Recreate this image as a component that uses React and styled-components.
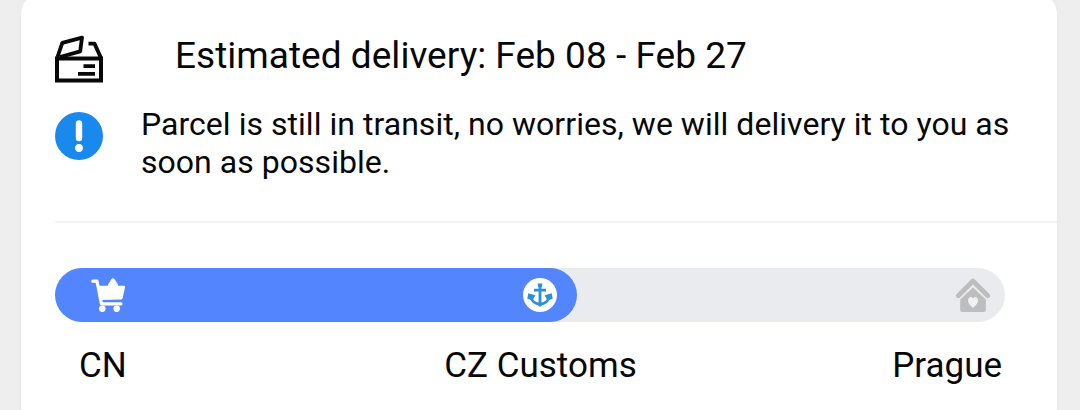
import React from 'react';
import styled, { createGlobalStyle } from 'styled-components';

const GlobalStyle = createGlobalStyle`
  * { box-sizing: border-box; }
  body { margin: 0; background: #eeeeee; font-family: Roboto, "Liberation Sans", sans-serif; color: #070707; }
`;

const Page = styled.main`
  height: 410px;
  overflow: hidden;
  padding: 0 23px 0 21px;
`;

const Card = styled.section`
  height: 440px;
  margin-top: -7px;
  padding: 41px 0 0 34px;
  background: #fff;
  border-radius: 21px;
  box-shadow: 0 0 4px #e6e6e6;
`;

const Row = styled.div`
  display: flex;
  align-items: flex-start;
`;

const RowIcon = styled.svg`
  flex: none;
  width: 48px;
  height: 48px;
  margin-top: ${(p) => p.$top}px;
`;

const Title = styled.h1`
  margin: 0 0 0 72px;
  font-size: 37px;
  line-height: 44px;
  font-weight: 400;
  letter-spacing: 0.025px;
  white-space: nowrap;
`;

const Message = styled.p`
  width: 890px;
  margin: 0 0 0 38px;
  font-size: 32px;
  line-height: 38px;
  letter-spacing: 0.035px;
`;

const Notice = styled(Row)`
  margin-top: 22px;
`;

const Divider = styled.hr`
  height: 2px;
  margin: 40px 0 45px;
  border: 0;
  background: #f3f3f3;
`;

const Track = styled.div`
  display: flex;
  align-items: center;
  justify-content: space-between;
  width: 950px;
  height: 54px;
  padding-right: 15px;
  border-radius: 27px;
  background: #eaebef;
`;

const Progress = styled.div`
  display: flex;
  align-items: center;
  justify-content: space-between;
  width: 522px;
  height: 54px;
  padding: 0 20px 0 36px;
  border-radius: 27px;
  background: #5385ff;
`;

const StepIcon = styled.svg`
  flex: none;
  width: 34px;
  height: 34px;
`;

const Labels = styled.div`
  display: grid;
  grid-template-columns: 1fr auto 1fr;
  width: 950px;
  margin-top: 23px;
  padding: 0 3px 0 24px;
  font-size: 35px;
  line-height: 42px;
`;

const Label = styled.span`
  white-space: nowrap;
  text-align: ${(p) => p.$align || 'left'};
`;

const ParcelIcon = () => (
  <RowIcon $top={1} viewBox="0 0 48 48" fill="none" stroke="#080808" strokeWidth="4">
    <path d="M2 23.6H46V45.6H2Z" />
    <path d="M2.5 22 7.3 7.8 27 2.6 25.2 16.3 5 22M33.5 8.6H39.5L46 23" strokeWidth="3.8" strokeLinejoin="round" />
    <path d="M28.5 31.2H40M23 38.8H40" strokeWidth="3.8" />
  </RowIcon>
);

const AlertIcon = () => (
  <RowIcon $top={7} viewBox="0 0 48 48">
    <circle cx="24" cy="24" r="24" fill="#1989ee" />
    <path d="M24 11.5V26" stroke="#fff" strokeWidth="6.4" strokeLinecap="round" />
    <circle cx="24" cy="36" r="3.9" fill="#fff" />
  </RowIcon>
);

const CartIcon = () => (
  <StepIcon viewBox="0 0 34 34" fill="#fff">
    <path d="M1.8 3.2H6L10.4 25.8H30" fill="none" stroke="#fff" strokeWidth="3.2" strokeLinecap="round" strokeLinejoin="round" />
    <path d="M7 7.8H33Q34.3 7.8 34 9.2L31.6 20.3Q31.4 21.4 30.2 21.5L10 22Z" />
    <path d="M17 6.4 20.2 1.6Q22 -1 23.8 1.6L27 6.4V8H17Z" />
    <circle cx="11.3" cy="30.8" r="3.3" />
    <circle cx="25.7" cy="30.8" r="3.3" />
  </StepIcon>
);

const AnchorIcon = () => (
  <StepIcon viewBox="0 0 34 34">
    <circle cx="17" cy="17" r="17" fill="#fff" />
    <g fill="none" stroke="#2d91da" strokeWidth="2.8">
      <path d="M17 7V28M11 12.2H23" />
      <path d="M7.5 18.5Q9.5 26 17 26Q24.5 26 26.5 18.5" />
    </g>
    <path d="M14.5 5.5H19.5L18.8 9H15.2ZM4.3 20.8 5.3 15.2 12.4 17.3 9.5 22.5ZM29.7 20.8 28.7 15.2 21.6 17.3 24.5 22.5ZM14 26 17 29 20 26Z" fill="#2d91da" />
  </StepIcon>
);

const HomeIcon = () => (
  <StepIcon viewBox="0 0 34 34">
    <path d="M2.4 17.6 17 3 31.6 17.6" fill="none" stroke="#bdbdbd" strokeWidth="4.8" strokeLinecap="round" strokeLinejoin="round" />
    <path d="M17 9.6 29.8 21.5V32Q29.8 34 27.8 34H6.2Q4.2 34 4.2 32V21.5Z" fill="#bdbdbd" />
    <path d="M17 29.8C13.5 26.8 12 25 12 22.3C12 18.8 15.8 17.6 17 20.6C18.2 17.6 22 18.8 22 22.3C22 25 20.5 26.8 17 29.8Z" fill="#f1f1f3" />
  </StepIcon>
);

export default function App() {
  return (
    <>
      <GlobalStyle />
      <Page>
        <Card>
          <Row>
            <ParcelIcon />
            <Title>Estimated delivery: Feb 08 - Feb 27</Title>
          </Row>
          <Notice>
            <AlertIcon />
            <Message>Parcel is still in transit, no worries, we will delivery it to you as soon as possible.</Message>
          </Notice>
          <Divider />
          <Track>
            <Progress>
              <CartIcon />
              <AnchorIcon />
            </Progress>
            <HomeIcon />
          </Track>
          <Labels>
            <Label>CN</Label>
            <Label>CZ Customs</Label>
            <Label $align="right">Prague</Label>
          </Labels>
        </Card>
      </Page>
    </>
  );
}
